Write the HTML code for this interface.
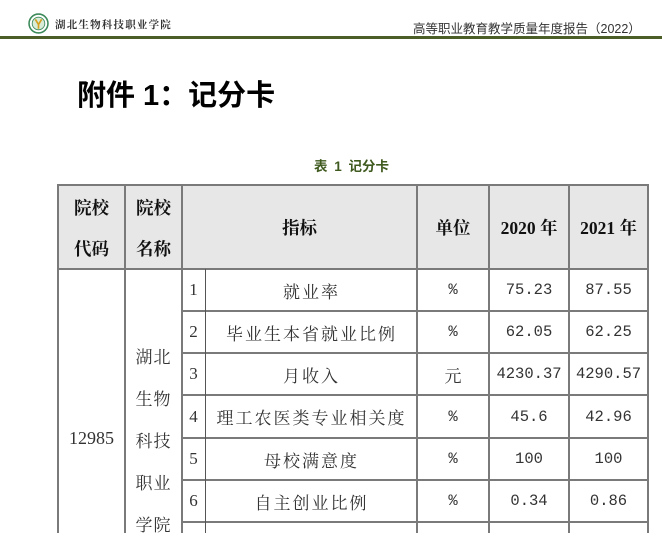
<!DOCTYPE html>
<html><head><meta charset="utf-8"><style>
body{margin:0;width:662px;height:533px;background:#fff;position:relative;overflow:hidden;font-family:"Liberation Serif","Noto Serif CJK SC",serif;}
.a{position:absolute}
.h{background:#7a7a7a}
.c{position:absolute;display:flex;align-items:center;justify-content:center;text-align:center;color:#333;font-size:16px;}
.b{font-family:"Liberation Serif","Noto Serif CJK SC",serif;font-weight:bold;color:#111;font-size:17.5px}
.m{font-family:"Liberation Mono",monospace;font-size:15.5px}
.n{font-size:17px}
</style></head><body>
<svg class="a" style="left:28px;top:13px" width="21" height="21" viewBox="0 0 20 20"><circle cx="10" cy="10" r="9" fill="#fff" stroke="#3c8a5a" stroke-width="1.5"/><circle cx="10" cy="10" r="6" fill="#d8ecd8" stroke="#3c8a5a" stroke-width="0.8"/><path d="M7 6 L10 11 L13 6 M10 11 L10 15" stroke="#d4a020" stroke-width="1.6" fill="none"/></svg>
<div class="a" style="left:55px;top:17px;font-family:'Noto Serif CJK SC',serif;font-weight:bold;font-size:10.5px;color:#333;letter-spacing:1.2px">湖北生物科技职业学院</div>
<div class="a" style="left:413px;top:18px;font-family:'Liberation Sans','Noto Sans CJK SC',sans-serif;font-size:12.5px;color:#333">高等职业教育教学质量年度报告（2022）</div>
<div class="a" style="left:0;top:36px;width:662px;height:3px;background:#4b5e27"></div>
<div class="a" style="left:77px;top:72px;font-family:'Liberation Sans','Noto Sans CJK SC',sans-serif;font-weight:bold;font-size:29px;color:#000">附件 1：记分卡</div>
<div class="a" style="left:314px;top:155px;font-family:'Liberation Sans','Noto Sans CJK SC',sans-serif;font-weight:bold;font-size:13.5px;color:#3f5a1f;word-spacing:3px">表 1 记分卡</div>
<div class="a" style="left:58px;top:185px;width:590px;height:84px;background:#e7e7e7"></div>
<div class="a h" style="left:58px;top:184px;width:591px;height:2px"></div>
<div class="a h" style="left:58px;top:268px;width:591px;height:2px"></div>
<div class="a h" style="left:182px;top:310px;width:467px;height:2px"></div>
<div class="a h" style="left:182px;top:352px;width:467px;height:2px"></div>
<div class="a h" style="left:182px;top:394px;width:467px;height:2px"></div>
<div class="a h" style="left:182px;top:437px;width:467px;height:2px"></div>
<div class="a h" style="left:182px;top:479px;width:467px;height:2px"></div>
<div class="a h" style="left:182px;top:521px;width:467px;height:2px"></div>
<div class="a h" style="left:57px;top:184px;width:2px;height:349px"></div>
<div class="a h" style="left:124px;top:184px;width:2px;height:349px"></div>
<div class="a h" style="left:181px;top:184px;width:2px;height:349px"></div>
<div class="a h" style="left:205px;top:269px;width:1px;height:264px;background:#555"></div>
<div class="a h" style="left:416px;top:184px;width:2px;height:349px"></div>
<div class="a h" style="left:488px;top:184px;width:2px;height:349px"></div>
<div class="a h" style="left:568px;top:184px;width:2px;height:349px"></div>
<div class="a h" style="left:647px;top:184px;width:2px;height:349px"></div>
<div class="c b" style="left:58px;top:196px;width:67px;height:22px">院校</div>
<div class="c b" style="left:58px;top:237px;width:67px;height:22px">代码</div>
<div class="c b" style="left:125px;top:196px;width:57px;height:22px">院校</div>
<div class="c b" style="left:125px;top:237px;width:57px;height:22px">名称</div>
<div class="c b" style="left:182px;top:185px;width:235px;height:84px">指标</div>
<div class="c b" style="left:417px;top:185px;width:72px;height:84px">单位</div>
<div class="c b" style="left:489px;top:185px;width:80px;height:84px">2020 年</div>
<div class="c b" style="left:569px;top:185px;width:79px;height:84px">2021 年</div>
<div class="c" style="left:58px;top:417px;width:67px;height:42px;font-size:18px">12985</div>
<div class="c n" style="left:125px;top:334px;width:57px;height:42px;letter-spacing:1px">湖北</div>
<div class="c n" style="left:125px;top:376px;width:57px;height:42px;letter-spacing:1px">生物</div>
<div class="c n" style="left:125px;top:418px;width:57px;height:42px;letter-spacing:1px">科技</div>
<div class="c n" style="left:125px;top:460px;width:57px;height:42px;letter-spacing:1px">职业</div>
<div class="c n" style="left:125px;top:502px;width:57px;height:42px;letter-spacing:1px">学院</div>

<div class="c n" style="left:182px;top:269px;width:23px;height:42px">1</div>
<div class="c n" style="left:206px;top:269px;width:211px;height:42px;letter-spacing:2px">就业率</div>
<div class="c m" style="left:417px;top:269px;width:72px;height:42px">%</div>
<div class="c m" style="left:489px;top:269px;width:80px;height:42px">75.23</div>
<div class="c m" style="left:569px;top:269px;width:79px;height:42px">87.55</div>

<div class="c n" style="left:182px;top:311px;width:23px;height:42px">2</div>
<div class="c n" style="left:206px;top:311px;width:211px;height:42px;letter-spacing:2px">毕业生本省就业比例</div>
<div class="c m" style="left:417px;top:311px;width:72px;height:42px">%</div>
<div class="c m" style="left:489px;top:311px;width:80px;height:42px">62.05</div>
<div class="c m" style="left:569px;top:311px;width:79px;height:42px">62.25</div>

<div class="c n" style="left:182px;top:353px;width:23px;height:42px">3</div>
<div class="c n" style="left:206px;top:353px;width:211px;height:42px;letter-spacing:2px">月收入</div>
<div class="c n" style="left:417px;top:353px;width:72px;height:42px">元</div>
<div class="c m" style="left:489px;top:353px;width:80px;height:42px">4230.37</div>
<div class="c m" style="left:569px;top:353px;width:79px;height:42px">4290.57</div>

<div class="c n" style="left:182px;top:395px;width:23px;height:43px">4</div>
<div class="c n" style="left:206px;top:395px;width:211px;height:43px;letter-spacing:2px">理工农医类专业相关度</div>
<div class="c m" style="left:417px;top:395px;width:72px;height:43px">%</div>
<div class="c m" style="left:489px;top:395px;width:80px;height:43px">45.6</div>
<div class="c m" style="left:569px;top:395px;width:79px;height:43px">42.96</div>

<div class="c n" style="left:182px;top:438px;width:23px;height:42px">5</div>
<div class="c n" style="left:206px;top:438px;width:211px;height:42px;letter-spacing:2px">母校满意度</div>
<div class="c m" style="left:417px;top:438px;width:72px;height:42px">%</div>
<div class="c m" style="left:489px;top:438px;width:80px;height:42px">100</div>
<div class="c m" style="left:569px;top:438px;width:79px;height:42px">100</div>

<div class="c n" style="left:182px;top:480px;width:23px;height:42px">6</div>
<div class="c n" style="left:206px;top:480px;width:211px;height:42px;letter-spacing:2px">自主创业比例</div>
<div class="c m" style="left:417px;top:480px;width:72px;height:42px">%</div>
<div class="c m" style="left:489px;top:480px;width:80px;height:42px">0.34</div>
<div class="c m" style="left:569px;top:480px;width:79px;height:42px">0.86</div>
</body></html>
